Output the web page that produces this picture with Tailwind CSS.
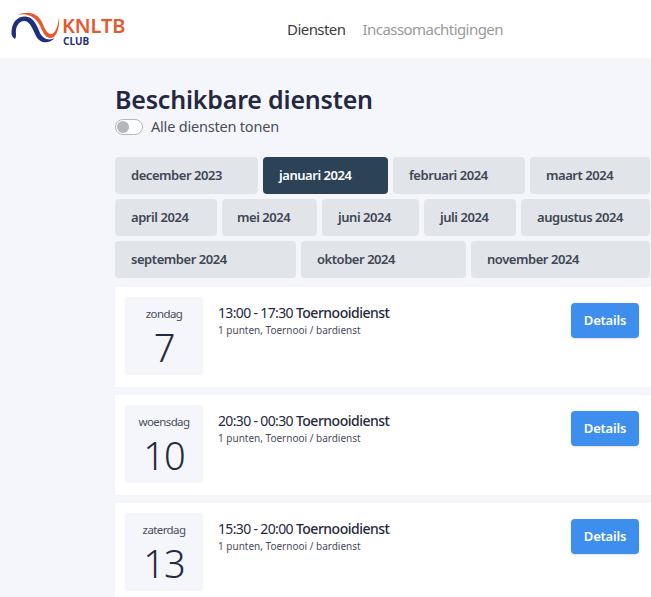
<!DOCTYPE html>
<html lang="nl">
<head>
  <meta charset="UTF-8"/>
  <title>Beschikbare diensten</title>
  <script src="https://cdn.jsdelivr.net/npm/@tailwindcss/browser@4"></script>
</head>
<body class="bg-[#f4f6fb] text-[#252840] font-['Noto_Sans',sans-serif] h-[597px] w-[651px] overflow-hidden">

  <!-- Header -->
  <header class="bg-white h-[58px] flex items-center relative">
    <div class="w-[140px] h-[58px] shrink-0 flex items-start pl-[11px] pt-[12px] gap-[1px]">
      <svg width="50" height="36" viewBox="0 0 50 36" fill="none">
        <path d="M7 3C14 -1 24 0 29 7C33 12 34 22 40 22C44 22 47 15 48 5C49 16 45 26 40 26C32 26 31 15 26 9C21 3 14 1 7 3Z" fill="#e8582c"/>
        <path d="M0.5 22C0 9 8 3.5 15 4.5C23 5.5 26 14 29 21C32 27 38 29 44 26C38 32 29 32 25 24C21 16 19 9 13 9C8 9 4 15 5 22C5 24 5 25 4 27C2 26 1 24 0.5 22Z" fill="#1f2f7d"/>
      </svg>
      <div class="flex flex-col mt-[3px]">
        <span class="text-[20px] font-semibold leading-[21px] text-[#e8582c] tracking-[-0.1px]">KNLTB</span>
        <span class="text-[10px] font-bold leading-[10px] ml-[1px] text-[#1f2f7d]">CLUB</span>
      </div>
    </div>
    <nav class="flex gap-[17px] ml-[147px] text-[15px] tracking-[-0.55px]">
      <a class="text-[#3c3c3c]">Diensten</a>
      <a class="text-[#9a9a9a]">Incassomachtigingen</a>
    </nav>
  </header>

  <main class="ml-[115px] w-[536px]">
    <h1 class="text-[25px] font-semibold leading-[36px] mt-[23px] tracking-[-0.2px]">Beschikbare diensten</h1>
    <div class="flex items-center gap-[8px] h-[20px]">
      <span class="w-[28px] h-[16px] rounded-full bg-white border border-[#b5b7bd] flex items-center pl-[1px]">
        <span class="w-[12px] h-[12px] rounded-full bg-[#b5b7bd]"></span>
      </span>
      <span class="text-[14.5px] text-[#4a4c5c] tracking-[-0.2px]">Alle diensten tonen</span>
    </div>

    <!-- Maanden -->
    <div class="mt-[20px] flex flex-col gap-[5px] text-[13px] font-semibold tracking-[-0.45px] text-[#3f4654]">
      <div class="flex gap-[5px]">
        <a class="w-[143px] h-[37px] pl-[16px] rounded-[4px] bg-[#e1e5ea] flex items-center">december 2023</a>
        <a class="w-[125px] h-[37px] pl-[16px] rounded-[4px] bg-[#2c4257] text-white flex items-center">januari 2024</a>
        <a class="w-[132px] h-[37px] pl-[16px] rounded-[4px] bg-[#e1e5ea] flex items-center">februari 2024</a>
        <a class="w-[120px] h-[37px] pl-[16px] rounded-[4px] bg-[#e1e5ea] flex items-center">maart 2024</a>
      </div>
      <div class="flex gap-[5px]">
        <a class="w-[102px] h-[37px] pl-[16px] rounded-[4px] bg-[#e1e5ea] flex items-center">april 2024</a>
        <a class="w-[95px] h-[37px] pl-[15px] rounded-[4px] bg-[#e1e5ea] flex items-center">mei 2024</a>
        <a class="w-[97px] h-[37px] pl-[16px] rounded-[4px] bg-[#e1e5ea] flex items-center">juni 2024</a>
        <a class="w-[92px] h-[37px] pl-[16px] rounded-[4px] bg-[#e1e5ea] flex items-center">juli 2024</a>
        <a class="w-[129px] h-[37px] pl-[16px] rounded-[4px] bg-[#e1e5ea] flex items-center">augustus 2024</a>
      </div>
      <div class="flex gap-[5px]">
        <a class="w-[181px] h-[37px] pl-[16px] rounded-[4px] bg-[#e1e5ea] flex items-center">september 2024</a>
        <a class="w-[165px] h-[37px] pl-[16px] rounded-[4px] bg-[#e1e5ea] flex items-center">oktober 2024</a>
        <a class="w-[179px] h-[37px] pl-[16px] rounded-[4px] bg-[#e1e5ea] flex items-center">november 2024</a>
      </div>
    </div>

    <!-- Diensten -->
    <div class="mt-[9px] flex flex-col gap-[8px]">
      <article class="bg-white h-[100px] flex items-start pl-[10px] pr-[12px] pt-[10px]">
        <div class="w-[78px] h-[78px] rounded-[4px] bg-[#f4f6fb] flex flex-col items-center pt-[9px]">
          <span class="text-[11.5px] leading-[16px] text-[#4a4c5c] tracking-[-0.6px]">zondag</span>
          <span class="text-[38px] leading-[44px] mt-[3px] font-light tracking-[-1px]">7</span>
        </div>
        <div class="ml-[15px] flex-1 pt-[6px]">
          <p class="text-[14px] leading-[20px] tracking-[-0.65px]">13:00 - 17:30 <span class="font-medium tracking-[-0.5px]">Toernooidienst</span></p>
          <p class="text-[10px] leading-[14px] text-[#4a4c5c]">1 punten, Toernooi / bardienst</p>
        </div>
        <button class="mt-[6px] w-[68px] h-[35px] rounded-[4px] bg-[#3e8fed] text-white text-[13px] font-semibold tracking-[-0.2px] shadow-sm">Details</button>
      </article>
      <article class="bg-white h-[100px] flex items-start pl-[10px] pr-[12px] pt-[10px]">
        <div class="w-[78px] h-[78px] rounded-[4px] bg-[#f4f6fb] flex flex-col items-center pt-[9px]">
          <span class="text-[11.5px] leading-[16px] text-[#4a4c5c] tracking-[-0.6px]">woensdag</span>
          <span class="text-[38px] leading-[44px] mt-[3px] font-light tracking-[-1px]">10</span>
        </div>
        <div class="ml-[15px] flex-1 pt-[6px]">
          <p class="text-[14px] leading-[20px] tracking-[-0.65px]">20:30 - 00:30 <span class="font-medium tracking-[-0.5px]">Toernooidienst</span></p>
          <p class="text-[10px] leading-[14px] text-[#4a4c5c]">1 punten, Toernooi / bardienst</p>
        </div>
        <button class="mt-[6px] w-[68px] h-[35px] rounded-[4px] bg-[#3e8fed] text-white text-[13px] font-semibold tracking-[-0.2px] shadow-sm">Details</button>
      </article>
      <article class="bg-white h-[100px] flex items-start pl-[10px] pr-[12px] pt-[10px]">
        <div class="w-[78px] h-[78px] rounded-[4px] bg-[#f4f6fb] flex flex-col items-center pt-[9px]">
          <span class="text-[11.5px] leading-[16px] text-[#4a4c5c] tracking-[-0.6px]">zaterdag</span>
          <span class="text-[38px] leading-[44px] mt-[3px] font-light tracking-[-1px]">13</span>
        </div>
        <div class="ml-[15px] flex-1 pt-[6px]">
          <p class="text-[14px] leading-[20px] tracking-[-0.65px]">15:30 - 20:00 <span class="font-medium tracking-[-0.5px]">Toernooidienst</span></p>
          <p class="text-[10px] leading-[14px] text-[#4a4c5c]">1 punten, Toernooi / bardienst</p>
        </div>
        <button class="mt-[6px] w-[68px] h-[35px] rounded-[4px] bg-[#3e8fed] text-white text-[13px] font-semibold tracking-[-0.2px] shadow-sm">Details</button>
      </article>
    </div>
  </main>
</body>
</html>
